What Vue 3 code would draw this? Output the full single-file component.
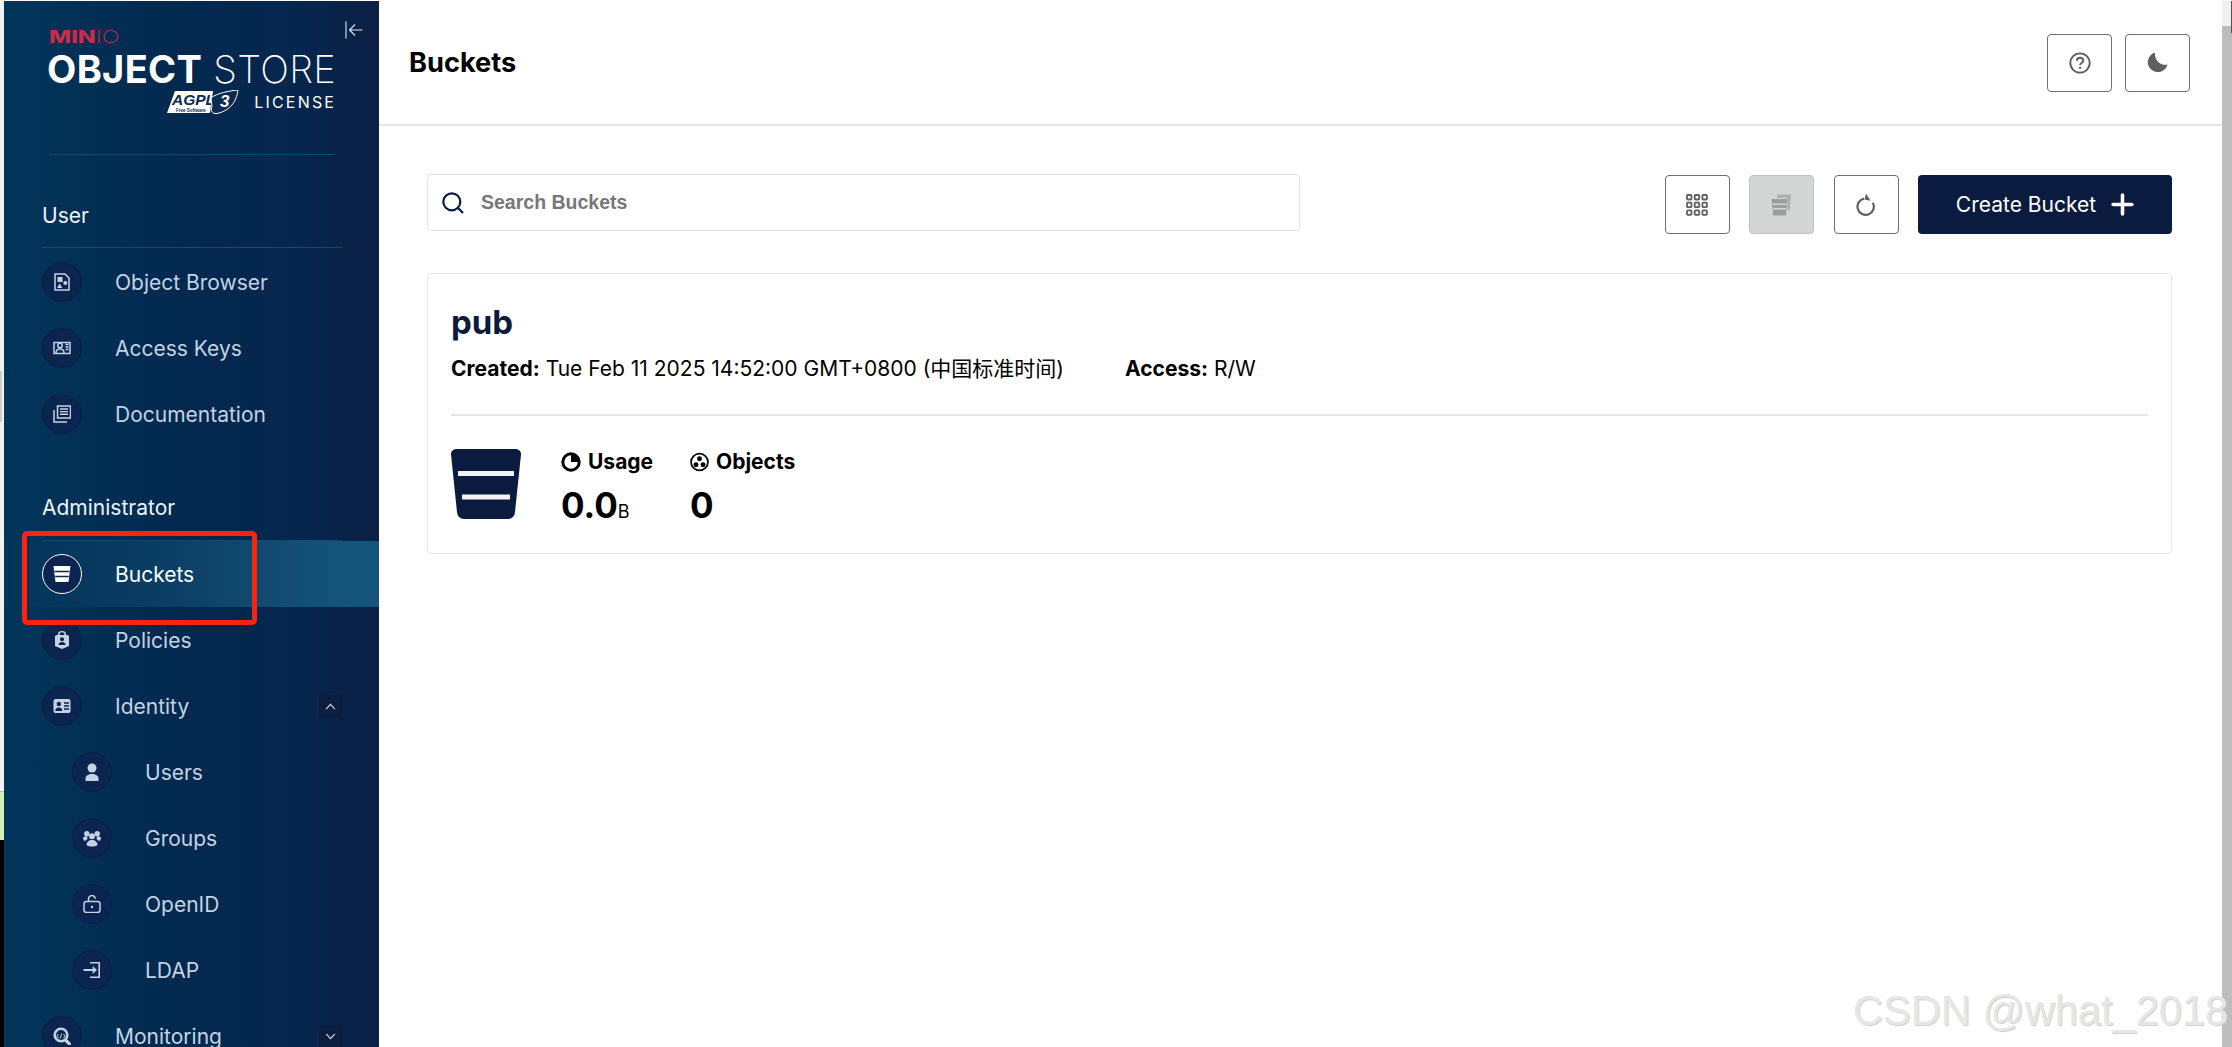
<script setup>
const stroke = 'fill="none" stroke="currentColor" stroke-width="1.5"'
const icons = {
  browser: `<path d="M2 1h10l4 4v12H2z" ${stroke}/><rect x="4.500" y="4" width="5" height="5" fill="currentColor"/><circle cx="12.300" cy="10" r="2" fill="currentColor"/><path d="M4 15l2.700-4.500L9.400 15z" fill="currentColor"/>`,
  keys: `<path d="M1 3.500h16v11H1z" ${stroke}/><circle cx="7" cy="6.500" r="2.200" ${stroke}/><path d="M3 14c0-3 2-4 4-4s4 1 4 4" ${stroke}/><path d="M12.500 5.500h3M12.500 8h3M12.500 10.500h3" stroke="currentColor" stroke-width="1.600"/>`,
  docs: `<path d="M4.500 1h13v12h-13z" ${stroke}/><path d="M7 4h8M7 6.600h8M7 9.200h8" stroke="currentColor" stroke-width="1.400"/><path d="M1 5v12h13" ${stroke}/>`,
  bucket: `<path d="M0.500 1h17l-2 16h-13z" fill="#fff"/><path d="M1.500 6.500h15M2.200 11.500h13.600" stroke="#0b2450" stroke-width="1.400"/>`,
  policy: `<path d="M9 18l-7-3V5.500a1.600 1.600 0 0 1 1.600-1.500H5V3a4 3 0 0 1 8 0v1h1.400A1.600 1.600 0 0 1 16 5.500V15z" fill="currentColor"/><circle cx="9" cy="8.300" r="2" fill="#0b2450"/><path d="M5.500 14c0-2 1.600-3 3.500-3s3.500 1 3.500 3z" fill="#0b2450"/><path d="M6.600 4V3a2.400 1.800 0 0 1 4.800 0v1z" fill="#0b2450"/>`,
  identity: `<rect x="0.500" y="2" width="17" height="14" rx="2" fill="currentColor"/><circle cx="5.800" cy="7" r="2.200" fill="#0b2450"/><path d="M2.300 14c0-2.500 1.500-3.500 3.500-3.500s3.500 1 3.500 3.500z" fill="#0b2450"/><path d="M11 6h5M11 9h5M11 12h5" stroke="#0b2450" stroke-width="1.300"/>`,
  user: `<circle cx="9" cy="5" r="4.500" fill="currentColor"/><path d="M2.500 18v-2.500c0-3 3-4.500 6.500-4.500s6.500 1.500 6.500 4.500V18z" fill="currentColor"/>`,
  groups: `<circle cx="9" cy="7.300" r="3" fill="currentColor"/><circle cx="3.800" cy="4.800" r="2.700" fill="currentColor"/><circle cx="14.200" cy="4.800" r="2.700" fill="currentColor"/><path d="M0 8.500c1-1 2.500-1.300 4-1.300l.5 2.800-2.500 2C.5 11.500 0 10 0 8.500zM18 8.500c-1-1-2.500-1.300-4-1.300l-.5 2.800 2.500 2c1.500-.5 2-2 2-3.500z" fill="currentColor"/><path d="M3.500 16c0-3 2.500-5 5.500-5s5.500 2 5.500 5c-1.500 1.200-3.500 1.600-5.500 1.600S5 17.200 3.500 16z" fill="currentColor"/>`,
  openid: `<rect x="1" y="6.500" width="16" height="11" rx="2.500" ${stroke}/><path d="M5.500 6.500V4.300a3.400 3.400 0 0 1 6.800-.6" ${stroke}/><circle cx="9" cy="12" r="1.200" fill="currentColor"/>`,
  ldap: `<path d="M7 1h10v16H7v-1.600h8.400V2.600H7z" fill="currentColor"/><path d="M0.500 8h9.200V5l4.300 4-4.300 4v-3H.5z" fill="currentColor"/>`,
  monitor: `<circle cx="8" cy="8" r="6.300" fill="none" stroke="currentColor" stroke-width="2.600"/><path d="M12.500 13l5 5" stroke="currentColor" stroke-width="3.200"/><path d="M5.500 7l-1.500 2 1.500 2M10.500 7l1.500 2-1.500 2M7.300 11.500l1.400-5" fill="none" stroke="currentColor" stroke-width="1"/>`
}

const userItems = [
  { label: 'Object Browser', icon: icons.browser },
  { label: 'Access Keys', icon: icons.keys },
  { label: 'Documentation', icon: icons.docs }
]
const adminItems = [
  { label: 'Buckets', icon: icons.bucket, active: true },
  { label: 'Policies', icon: icons.policy },
  { label: 'Identity', icon: icons.identity, chevron: 'up' },
  { label: 'Users', icon: icons.user, sub: true },
  { label: 'Groups', icon: icons.groups, sub: true },
  { label: 'OpenID', icon: icons.openid, sub: true },
  { label: 'LDAP', icon: icons.ldap, sub: true },
  { label: 'Monitoring', icon: icons.monitor, chevron: 'down' }
]
</script>

<template>
  <div class="page">
    <div class="edge">
      <div class="edge-light"><i class="edge-thumb"></i></div>
      <div class="edge-green"></div>
      <div class="edge-black"></div>
    </div>

    <aside class="sidebar">
      <div class="brand">
        <div class="brand-top">
          <div class="minio"><b>MIN</b><span>IO</span></div>
          <svg class="collapse" viewBox="0 0 18 18" width="18" height="18" fill="none" stroke="#dfe6ee" stroke-width="1.100">
            <path d="M1 0.500v17M17.500 9H4.500M10 3.500L4.500 9l5.500 5.500" />
          </svg>
        </div>
        <div class="product"><b>OBJECT</b><span>STORE</span></div>
        <div class="license">
          <svg class="agpl" viewBox="0 0 72 24" width="72" height="24">
            <path d="M8 1h38l-3 22H0z" fill="#fff" />
            <text x="5" y="14.500" class="agpl-name">AGPL</text>
            <text x="9" y="21.500" class="agpl-free">Free Software</text>
            <path d="M44 8C50 3 62 1 71 0 70 8 66 20 50 23.500 44 24 44 20 45 16z" fill="#0a2a50" stroke="#fff" stroke-width="1" />
            <text x="53" y="17" class="agpl-three">3</text>
          </svg>
          <span>LICENSE</span>
        </div>
        <div class="brand-rule"></div>
      </div>

      <section class="group group-user">
        <h3>User</h3>
        <div class="group-rule"></div>
        <div v-for="item in userItems" :key="item.label" class="row">
          <span class="disc"><svg viewBox="0 0 18 18" width="18" height="18" v-html="item.icon"></svg></span>
          <span class="label">{{ item.label }}</span>
        </div>
      </section>

      <section class="group group-admin">
        <h3>Administrator</h3>
        <div class="group-rule"></div>
        <div
          v-for="item in adminItems"
          :key="item.label"
          class="row"
          :class="{ active: item.active, sub: item.sub }"
        >
          <span class="disc"><svg viewBox="0 0 18 18" width="18" height="18" v-html="item.icon"></svg></span>
          <span class="label">{{ item.label }}</span>
          <span v-if="item.chevron" class="chev">
            <svg viewBox="0 0 12 8" width="11" height="7" fill="none" stroke="#dfe6ee" stroke-width="1.200">
              <path v-if="item.chevron === 'up'" d="M1 7l5-5.500L11 7" />
              <path v-else d="M1 1l5 5.500L11 1" />
            </svg>
          </span>
        </div>
      </section>
    </aside>

    <main class="main">
      <header class="topbar">
        <h1>Buckets</h1>
        <div class="top-actions">
          <button class="icon-btn">
            <svg viewBox="0 0 20 20" width="22" height="22" fill="none" stroke="#5f5f5f">
              <circle cx="10" cy="10" r="8.800" stroke-width="1.700" />
              <path d="M7.200 8c0-1.800 1.300-2.800 2.900-2.800s2.800 1 2.800 2.500c0 2.200-2.800 2.300-2.800 4.300" stroke-width="1.800" />
              <circle cx="10.100" cy="14.400" r="1.100" fill="#5f5f5f" stroke="none" />
            </svg>
          </button>
          <button class="icon-btn">
            <svg viewBox="0 0 21 21" width="21" height="21">
              <path d="M8 0.500A10 10 0 1 0 20.500 12.500C14 14.500 7 8 8 .5z" fill="#5f5f5f" />
            </svg>
          </button>
        </div>
      </header>

      <div class="content">
        <div class="toolbar">
          <label class="search">
            <svg viewBox="0 0 22 22" width="22" height="22" fill="none" stroke="#081c42" stroke-width="2.200">
              <circle cx="9.800" cy="9.800" r="8.500" />
              <path d="M15.800 15.800l5.200 5.200" />
            </svg>
            <input type="text" placeholder="Search Buckets" />
          </label>
          <div class="tools">
            <button class="icon-btn tall">
              <svg viewBox="0 0 22 22" width="22" height="22" fill="none" stroke="#5f5f5f" stroke-width="1.800">
                <rect x="1" y="1" width="4.500" height="4.500" rx=".8" />
                <rect x="8.700" y="1" width="4.500" height="4.500" rx=".8" />
                <rect x="16.400" y="1" width="4.500" height="4.500" rx=".8" />
                <rect x="1" y="8.700" width="4.500" height="4.500" rx=".8" />
                <rect x="8.700" y="8.700" width="4.500" height="4.500" rx=".8" />
                <rect x="16.400" y="8.700" width="4.500" height="4.500" rx=".8" />
                <rect x="1" y="16.400" width="4.500" height="4.500" rx=".8" />
                <rect x="8.700" y="16.400" width="4.500" height="4.500" rx=".8" />
                <rect x="16.400" y="16.400" width="4.500" height="4.500" rx=".8" />
              </svg>
            </button>
            <button class="icon-btn tall disabled">
              <svg viewBox="0 0 22 22" width="22" height="22">
                <path d="M6 0.500h14l-1.500 16h-2V4H6z" fill="#acafae" />
                <path d="M0.500 5h16l-1.600 16.500H2.200z" fill="#9b9e9d" />
                <path d="M1.500 10.300h14M2 14.800h13" stroke="#d3d5d4" stroke-width="1.400" />
              </svg>
            </button>
            <button class="icon-btn tall">
              <svg viewBox="0 0 22 24" width="20" height="23" fill="none" stroke="#5f5f5f" stroke-width="2.400">
                <path d="M9 5.500A9 9 0 1 0 18.500 10" />
                <path d="M11 0l-1.500 6.500 6.500 1.500z" fill="#5f5f5f" stroke="none" />
              </svg>
            </button>
            <button class="create">
              <span>Create Bucket</span>
              <svg viewBox="0 0 22 22" width="23" height="23" stroke="#fff" stroke-width="3.400" stroke-linecap="round">
                <path d="M11 2v18M2 11h18" />
              </svg>
            </button>
          </div>
        </div>

        <article class="card">
          <h2>pub</h2>
          <div class="meta">
            <span><b>Created:</b> Tue Feb 11 2025 14:52:00 GMT+0800 (中国标准时间)</span>
            <span><b>Access:</b> R/W</span>
          </div>
          <div class="card-rule"></div>
          <div class="stats">
            <svg class="big-bucket" viewBox="0 0 70 70" width="70" height="70">
              <path d="M5 0h60a5 5 0 0 1 5 5.500L64 63a7 7 0 0 1-7 7H13a7 7 0 0 1-7-7L0 5.500A5 5 0 0 1 5 0z" fill="#0b1b40" />
              <path d="M7 24.500h56M11 48h48" stroke="#f1f1f1" stroke-width="5" />
            </svg>
            <div class="stat">
              <div class="stat-head">
                <svg viewBox="0 0 20 20" width="20" height="20">
                  <circle cx="10" cy="10" r="8.200" fill="#fff" stroke="#000" stroke-width="3" />
                  <path d="M10 2v8h8a8 8 0 0 0-8-8z" fill="#000" />
                </svg>
                <span>Usage</span>
              </div>
              <div class="stat-value">0.0<small>B</small></div>
            </div>
            <div class="stat">
              <div class="stat-head">
                <svg viewBox="0 0 20 20" width="19" height="20">
                  <circle cx="10" cy="10" r="8.900" fill="none" stroke="#000" stroke-width="1.800" />
                  <circle cx="10" cy="6.500" r="2.600" fill="#000" />
                  <circle cx="6.300" cy="12.800" r="2.600" fill="#000" />
                  <circle cx="13.700" cy="12.800" r="2.600" fill="#000" />
                </svg>
                <span>Objects</span>
              </div>
              <div class="stat-value">0</div>
            </div>
          </div>
        </article>
      </div>
    </main>

    <div class="scrollbar">
      <div class="scroll-cap"><i></i></div>
      <div class="scroll-thumb"></div>
    </div>

    <div class="annotation"></div>
    <div class="watermark">CSDN @what_2018</div>
  </div>
</template>

<style>
html, body { margin: 0; padding: 0; background: #fff; }
</style>

<style scoped>
.page {
  position: relative;
  display: flex;
  height: 1047px;
  overflow: hidden;
  background: #fff;
  font-family: Inter, "Noto Sans CJK SC", sans-serif;
  color: #000;
}

.edge { width: 4px; flex: none; display: flex; flex-direction: column; }
.edge-light { position: relative; height: 792px; flex: none; background: #f1f3f3; border-bottom: 1px solid #b8c4ac; box-sizing: border-box; }
.edge-thumb { position: absolute; top: 371px; left: 0; width: 2px; height: 51px; background: #cccccc; }
.edge-green { height: 48px; flex: none; background: #d5efbd; }
.edge-black { flex: 1; background: #000; }

.sidebar {
  width: 375px;
  flex: none;
  margin-top: 1px;
  overflow: hidden;
  box-sizing: border-box;
  background: linear-gradient(90deg, #02355a 0%, #03294f 45%, #06264e 78%, #0b1f43 100%);
  color: #fff;
}

.brand { padding: 0 0 0 45px; height: 153px; box-sizing: border-box; position: relative; }
.brand-top { display: flex; justify-content: space-between; padding: 29px 16px 0 0; height: 52px; box-sizing: border-box; }
.minio { font-size: 17px; line-height: 14px; height: 14px; color: #c72c48; white-space: nowrap; transform: scaleX(1.38); transform-origin: left center; }
.minio b { font-weight: 800; }
.minio span { font-weight: 200; }
.collapse { margin-top: -9px; }
.product { font-size: 38px; line-height: 32px; white-space: nowrap; letter-spacing: .35px; margin-left: -2px; }
.product b { font-weight: 700; }
.product span { font-weight: 200; margin-left: 11px; }
.license { display: flex; align-items: center; justify-content: flex-end; width: 285px; margin-top: 5px; font-size: 16px; letter-spacing: 2.2px; gap: 15px; }
.license span { margin-right: -2.200px; }
.agpl { flex: none; letter-spacing: 0; }
.agpl-name { font: italic 700 15.500px "Liberation Sans", sans-serif; fill: #0a2a50; }
.agpl-free { font: 700 4.500px "Liberation Sans", sans-serif; fill: #0a2a50; }
.agpl-three { font: italic 700 17px "Liberation Sans", sans-serif; fill: #fff; }
.brand-rule { position: absolute; left: 45px; bottom: -1px; width: 285px; height: 1px; background: #0f4a74; }

.group h3 { margin: 0 0 0 38px; font-size: 21px; line-height: 26px; font-weight: 400; color: #eef3f8; }
.group-rule { margin: 0 37px 0 38px; height: 1px; background: #0f4a74; }
.group-user { margin-top: 48.500px; }
.group-admin { margin-top: 48px; }
.group-user .group-rule { margin-top: 18.500px; margin-bottom: 1px; }
.group-admin .group-rule { margin-top: 19px; }

.row { position: relative; display: flex; align-items: center; height: 66px; padding: 0 37px 0 38px; box-sizing: border-box; color: #c3d3e3; }
.row.sub { padding-left: 68px; }
.row.active { color: #fff; background: linear-gradient(90deg, rgba(20,84,122,0) 0%, #14547a 88%); }
.disc { width: 40px; height: 40px; flex: none; box-sizing: border-box; border: 1px solid #0a2146; border-radius: 50%; background: #0b2450; display: flex; align-items: center; justify-content: center; }
.active .disc { border-color: #fff; }
.label { margin-left: 33px; font-size: 21px; flex: 1; white-space: nowrap; }
.chev { width: 23px; height: 23px; flex: none; border-radius: 3px; background: #0b1e40; display: flex; align-items: center; justify-content: center; }

.main { flex: 1; min-width: 0; display: flex; flex-direction: column; }
.topbar { height: 126px; flex: none; box-sizing: border-box; border-bottom: 2px solid #e6e6e6; display: flex; align-items: center; justify-content: space-between; padding: 0 32px 0 30px; }
.topbar h1 { margin: 0; font-size: 27.200px; font-weight: 700; }
.top-actions { display: flex; gap: 13px; margin-top: 1px; }

.icon-btn { width: 65px; height: 58px; padding: 0; box-sizing: border-box; background: #fff; border: 1.500px solid #6e6e6e; border-radius: 4px; display: flex; align-items: center; justify-content: center; }
.icon-btn.tall { height: 59px; }
.icon-btn.disabled { background: #d4d6d5; border-color: #c0c2c1; }

.content { padding: 48px 50px 0 48px; }
.toolbar { display: flex; justify-content: space-between; align-items: flex-start; }
.search { width: 873px; height: 57px; box-sizing: border-box; border: 1.500px solid #e2e2e2; border-radius: 4px; display: flex; align-items: center; gap: 17px; padding-left: 14px; color: #081c42; }
.search svg { flex: none; }
.search input { flex: 1; min-width: 0; border: 0; outline: 0; background: transparent; font: 700 19.500px "Liberation Sans", sans-serif; color: #777; padding: 0; }
.search input::placeholder { color: #777; opacity: 1; }
.tools { display: flex; gap: 19.500px; margin-top: 1px; }
.create { width: 254px; height: 59px; border: 0; border-radius: 4px; background: #0b1b40; color: #fff; font: 400 21px Inter, sans-serif; display: flex; align-items: center; justify-content: center; gap: 15px; padding: 0; }

.card { margin-top: 39px; height: 281px; box-sizing: border-box; border: 1.500px solid #e6e6e6; border-radius: 4px; padding: 26px 23px 0; }
.card h2 { margin: 0; font-size: 33px; line-height: 44px; font-weight: 700; color: #0b1b40; }
.meta { display: flex; gap: 61px; margin-top: 12px; font-size: 21px; line-height: 26px; white-space: nowrap; }
.meta b { font-weight: 700; }
.card-rule { margin-top: 32px; height: 2px; background: #e6e6e6; }
.stats { display: flex; margin-top: 33px; }
.big-bucket { flex: none; margin-right: 40px; }
.stat { width: 129px; }
.stat-head { display: flex; align-items: center; gap: 7px; margin-top: 1.500px; font-size: 21px; line-height: 22px; font-weight: 700; }
.stat-value { margin-top: 10px; font-size: 35px; line-height: 44px; font-weight: 700; }
.stat-value small { font-size: 18px; font-weight: 400; }

.scrollbar { width: 10px; flex: none; display: flex; flex-direction: column; margin-top: 1px; }
.scroll-cap { height: 25px; flex: none; background: #f0f0f0; position: relative; }
.scroll-cap i { position: absolute; right: 0; top: 0; width: 1px; height: 32px; background: #555; }
.scroll-thumb { flex: 1; background: #bdbdbd; }

.annotation { position: absolute; left: 22px; top: 531px; width: 235px; height: 94px; box-sizing: border-box; border: 5px solid #fb2312; border-radius: 5px; }
.watermark { position: absolute; left: 1853px; top: 987px; font: 400 41.600px/48px "Liberation Sans", sans-serif; color: #e6e6e6; text-shadow: 1px 1px 1px #cfcfcf; white-space: nowrap; }
</style>
